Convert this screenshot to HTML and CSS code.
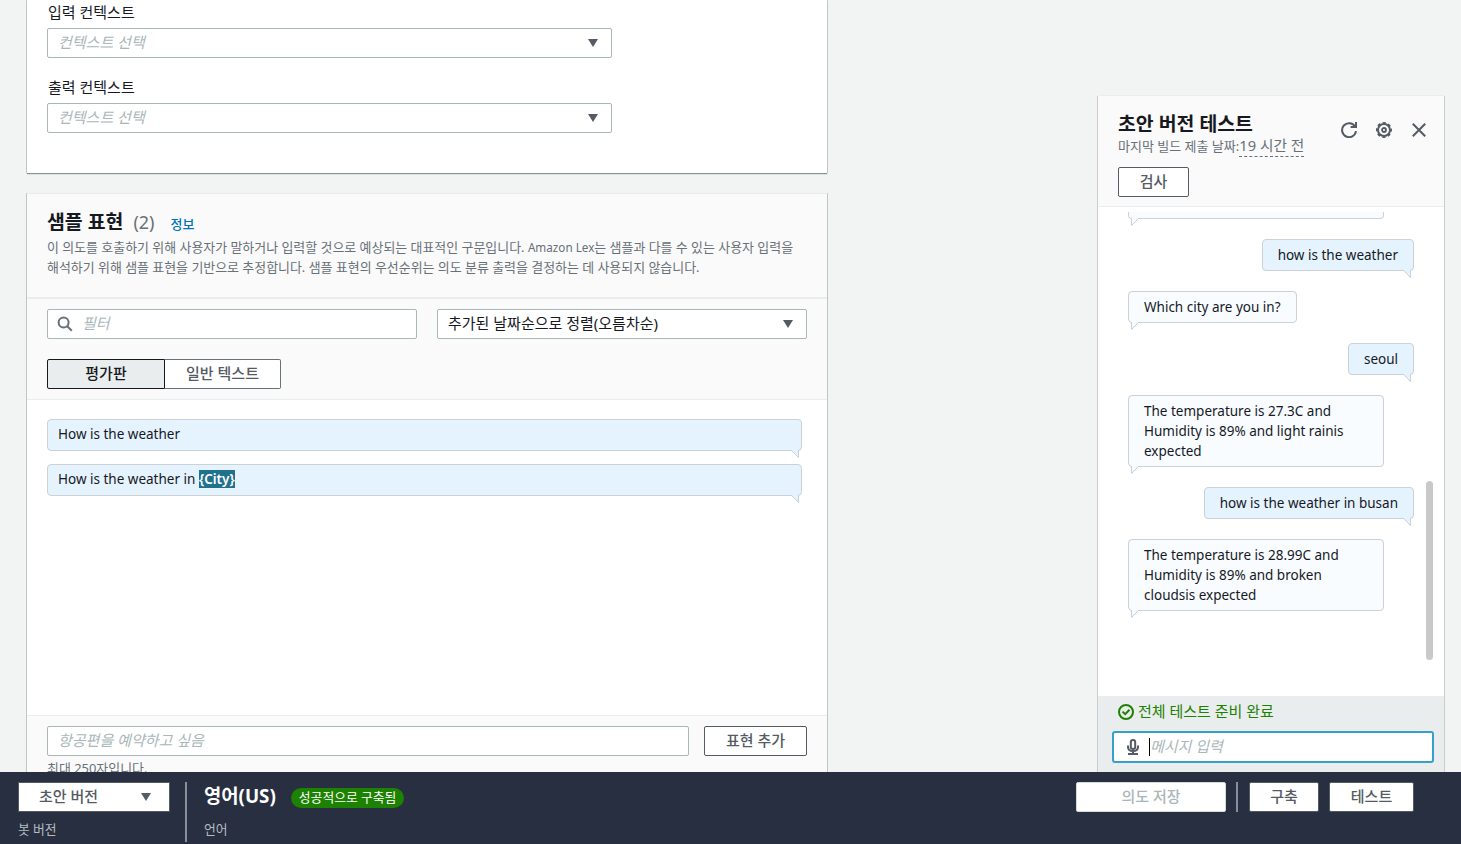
FILE: index.html
```html
<!DOCTYPE html>
<html lang="ko">

<head>
    <meta charset="UTF-8">
    <meta name="viewport" content="width=device-width, initial-scale=1.0">
    <title>Amazon Lex</title>
    <link rel="stylesheet" href="styles.css">
</head>

<body>
    <main class="workspace">
        <div class="editor">
            <section class="card contexts">
                <div class="field">
                    <label class="field-label">입력 컨텍스트</label>
                    <div class="select">
                        <span class="placeholder">컨텍스트 선택</span>
                        <span class="caret"></span>
                    </div>
                </div>
                <div class="field">
                    <label class="field-label">출력 컨텍스트</label>
                    <div class="select">
                        <span class="placeholder">컨텍스트 선택</span>
                        <span class="caret"></span>
                    </div>
                </div>
            </section>

            <section class="card utterances">
                <header class="card-header">
                    <div class="card-heading">
                        <h2 class="title">샘플 표현</h2>
                        <span class="count">(2)</span>
                        <a class="info-link">정보</a>
                    </div>
                    <p class="description">이 의도를 호출하기 위해 사용자가 말하거나 입력할 것으로 예상되는 대표적인 구문입니다. <span class="product">Amazon Lex</span>는 샘플과 다를 수 있는 사용자 입력을<br>해석하기 위해 샘플 표현을 기반으로 추정합니다. 샘플 표현의 우선순위는 의도 분류 출력을 결정하는 데 사용되지 않습니다.</p>
                </header>

                <div class="filters">
                    <div class="filter-row">
                        <div class="select search">
                            <svg class="search-icon" width="16" height="16" viewBox="0 0 16 16" fill="none" stroke="#687078" stroke-width="2">
                                <circle cx="6.6" cy="6.6" r="5" />
                                <path d="M10.2 10.2l4.6 4.6" />
                            </svg>
                            <span class="placeholder">필터</span>
                        </div>
                        <div class="select sort">
                            <span>추가된 날짜순으로 정렬(오름차순)</span>
                            <span class="caret"></span>
                        </div>
                    </div>
                    <div class="segments">
                        <button class="segment active">평가판</button>
                        <button class="segment">일반 텍스트</button>
                    </div>
                </div>

                <div class="utterance-list">
                    <div class="bubble user">How is the weather<svg class="tail" width="9" height="9" viewBox="0 0 9 9"><path d="M0 0L7.5 7.5V0" /></svg></div>
                    <div class="bubble user">How is the weather in <span class="slot">{City}</span><svg class="tail" width="9" height="9" viewBox="0 0 9 9"><path d="M0 0L7.5 7.5V0" /></svg></div>
                </div>

                <footer class="add-utterance">
                    <div class="add-row">
                        <div class="select"><span class="placeholder">항공편을 예약하고 싶음</span></div>
                        <button class="button">표현 추가</button>
                    </div>
                    <p class="hint">최대 250자입니다.</p>
                </footer>
            </section>
        </div>

        <aside class="test-panel">
            <header class="test-header">
                <div class="test-heading">
                    <h2 class="title">초안 버전 테스트</h2>
                    <div class="build-date">마지막 빌드 제출 날짜:<span class="ago">19 시간 전</span></div>
                    <button class="button inspect">검사</button>
                </div>
                <div class="test-icons">
                    <svg width="16" height="16" viewBox="0 0 16 16" fill="none" stroke="#545b64" stroke-width="2">
                        <path d="M15 9.2A7 7 0 1 1 14 4.4" />
                        <path d="M15 0v5H9.6" />
                    </svg>
                    <svg width="16" height="16" viewBox="0 0 16 16" fill="none" stroke="#545b64" stroke-width="2">
                        <circle cx="8" cy="8" r="6" />
                        <circle cx="8" cy="8" r="7.2" stroke-width="1.6" stroke-dasharray="3.2 2.455" stroke-dashoffset="1.6" />
                        <circle cx="8" cy="8" r="2" stroke-width="1.8" />
                    </svg>
                    <svg width="16" height="16" viewBox="0 0 16 16" fill="none" stroke="#545b64" stroke-width="2">
                        <path d="M1.8 1.8l12.4 12.4M14.2 1.8L1.8 14.2" />
                    </svg>
                </div>
            </header>

            <div class="chat">
                <div class="messages">
                    <div class="bubble bot cut"><svg class="tail" width="9" height="9" viewBox="0 0 9 9"><path d="M9 0L1.5 7.5V0" /></svg></div>
                    <div class="bubble user">how is the weather<svg class="tail" width="9" height="9" viewBox="0 0 9 9"><path d="M0 0L7.5 7.5V0" /></svg></div>
                    <div class="bubble bot">Which city are you in?<svg class="tail" width="9" height="9" viewBox="0 0 9 9"><path d="M9 0L1.5 7.5V0" /></svg></div>
                    <div class="bubble user">seoul<svg class="tail" width="9" height="9" viewBox="0 0 9 9"><path d="M0 0L7.5 7.5V0" /></svg></div>
                    <div class="bubble bot wide">The temperature is 27.3C and<br>Humidity is 89% and light rainis<br>expected<svg class="tail" width="9" height="9" viewBox="0 0 9 9"><path d="M9 0L1.5 7.5V0" /></svg></div>
                    <div class="bubble user">how is the weather in busan<svg class="tail" width="9" height="9" viewBox="0 0 9 9"><path d="M0 0L7.5 7.5V0" /></svg></div>
                    <div class="bubble bot wide">The temperature is 28.99C and<br>Humidity is 89% and broken<br>cloudsis expected<svg class="tail" width="9" height="9" viewBox="0 0 9 9"><path d="M9 0L1.5 7.5V0" /></svg></div>
                </div>
                <div class="scroll-thumb"></div>
            </div>

            <footer class="composer">
                <div class="status">
                    <svg width="16" height="16" viewBox="0 0 16 16" fill="none" stroke="#1d8102" stroke-width="2">
                        <circle cx="8" cy="8" r="7" />
                        <path d="M4.5 7.6l2.7 2.6 4.3-4.4" />
                    </svg>
                    <span>전체 테스트 준비 완료</span>
                </div>
                <div class="message-input">
                    <svg width="12" height="16" viewBox="0 0 12 16" fill="none" stroke="#545b64" stroke-width="2">
                        <rect x="3.8" y="1" width="4.4" height="9" rx="2.2" />
                        <path d="M1 6.5v1.4c0 2.6 2 4.1 5 4.1s5-1.5 5-4.1V6.5M6 12v3M1 15h10" />
                    </svg>
                    <span class="cursor"></span>
                    <span class="placeholder">메시지 입력</span>
                </div>
            </footer>
        </aside>
    </main>

    <footer class="toolbar">
        <div class="version">
            <div class="version-select"><span>초안 버전</span><span class="caret"></span></div>
            <span class="caption">봇 버전</span>
        </div>
        <div class="divider"></div>
        <div class="language">
            <div class="language-row">
                <strong>영어(US)</strong>
                <span class="badge">성공적으로 구축됨</span>
            </div>
            <span class="caption">언어</span>
        </div>
        <div class="actions">
            <button class="button save" disabled>의도 저장</button>
            <div class="divider"></div>
            <button class="button build">구축</button>
            <button class="button test">테스트</button>
        </div>
    </footer>
</body>

</html>
```

FILE: styles.css
```css
:root {
    --page: #f2f3f3;
    --panel: #fafafa;
    --text: #16191f;
    --muted: #687078;
    --dark: #545b64;
    --input-border: #aab7b8;
    --line: #eaeded;
    --bubble-border: #ccd1d5;
}

* {
    margin: 0;
    padding: 0;
    box-sizing: border-box;
}

body {
    height: 844px;
    overflow: hidden;
    display: flex;
    flex-direction: column;
    background: var(--page);
    color: var(--text);
    font-family: "Noto Sans", "Noto Sans CJK KR", sans-serif;
    font-size: 15px;
    line-height: 20px;
}

button {
    font: inherit;
}

.workspace {
    height: 772px;
    display: flex;
    justify-content: space-between;
    padding: 0 17px 0 27px;
    overflow: hidden;
}

.editor {
    width: 800px;
    display: flex;
    flex-direction: column;
    gap: 21px;
}

.card {
    flex: none;
    background: #fff;
    box-shadow: 0 1px 1px rgba(0, 28, 36, 0.45), 1px 0 0 #d0d4d5, -1px 0 0 #d0d4d5;
}

.contexts {
    display: flex;
    flex-direction: column;
    gap: 19px;
    height: 173px;
    padding: 2px 20px 0;
}

.field {
    width: 565px;
}

.field-label {
    display: block;
    margin-bottom: 6px;
    padding-left: 1px;
}

.select {
    display: flex;
    align-items: center;
    height: 30px;
    padding: 0 13px 0 10px;
    background: #fff;
    border: 1px solid var(--input-border);
    border-radius: 2px;
}

.select span:first-of-type:not(.caret) {
    padding-bottom: 2px;
}

.placeholder {
    color: var(--input-border);
    font-style: italic;
}

.caret {
    margin-left: auto;
    border: 5px solid transparent;
    border-top: 8px solid var(--dark);
    border-bottom: 0;
}

.utterances {
    border-top: 1px solid var(--line);
    margin-top: -1px;
}

.card-header {
    height: 103px;
    padding: 16px 20px 0;
    background: var(--panel);
}

.card-heading {
    display: flex;
    align-items: baseline;
    height: 27px;
}

.title {
    font-size: 19.4px;
    font-weight: 700;
    line-height: 24px;
}

.count {
    margin-left: 10px;
    font-size: 18px;
    color: var(--muted);
}

.info-link {
    margin-left: 16px;
    font-size: 13px;
    font-weight: 500;
    color: #0073bb;
}

.description,
.hint {
    font-size: 12.95px;
    color: var(--muted);
    white-space: nowrap;
}

.product {
    font-size: 11.7px;
}

.filters {
    height: 103px;
    padding: 10px 20px 0;
    background: var(--panel);
    border-top: 2px solid var(--line);
    border-bottom: 1px solid var(--line);
}

.filter-row {
    display: grid;
    grid-template-columns: 1fr 1fr;
    gap: 20px;
    margin-bottom: 20px;
}

.search {
    padding-left: 9px;
    gap: 9px;
}

.segments {
    display: flex;
}

.segment {
    width: 116px;
    height: 30px;
    padding-bottom: 2px;
    border: 1px solid var(--muted);
    border-left: 0;
    border-radius: 0 2px 2px 0;
    background: #fff;
    color: var(--dark);
    font-weight: 500;
}

.segment.active {
    width: 118px;
    border: 1px solid var(--text);
    border-radius: 2px 0 0 2px;
    background: var(--line);
    color: var(--text);
}

.utterance-list {
    display: flex;
    flex-direction: column;
    gap: 13px;
    height: 315px;
    padding: 19px 25px 0 20px;
}

.bubble {
    position: relative;
    padding: 5px 15px;
    border: 1px solid var(--bubble-border);
    border-radius: 4px;
    font-size: 13.5px;
}

.bubble.user {
    background: #e5f3ff;
}

.bubble.bot {
    background: #f8fcff;
}

.tail {
    position: absolute;
    bottom: -9px;
    stroke: var(--bubble-border);
}

.user .tail {
    right: 1px;
    fill: #e5f3ff;
}

.bot .tail {
    left: 1px;
    fill: #f8fcff;
}

.utterance-list .bubble {
    padding: 4px 10px 6px;
}

.slot {
    display: inline-block;
    height: 18px;
    line-height: 18px;
    background: #21718d;
    color: #fff;
    font-weight: 600;
}

.add-utterance {
    padding: 10px 20px;
    background: var(--panel);
    border-top: 1px solid var(--line);
}

.add-row {
    display: flex;
    gap: 15px;
}

.add-row .select {
    flex: 1;
}

.button {
    height: 30px;
    padding-bottom: 2px;
    border: 1px solid var(--dark);
    border-radius: 2px;
    background: #fff;
    color: var(--dark);
    font-weight: 500;
}

.add-row .button {
    width: 103px;
}

.hint {
    margin-top: 2px;
}

.test-panel {
    width: 346px;
    margin-top: 96px;
    display: flex;
    flex-direction: column;
    background: #fff;
    box-shadow: 0 -1px 0 var(--line), 1px 0 0 #c8cdce, -1px 0 0 #c8cdce;
}

.test-header {
    display: flex;
    justify-content: space-between;
    height: 111px;
    padding: 15px 17px 0 20px;
    background: var(--panel);
    border-bottom: 1px solid var(--line);
}

.test-heading .title {
    padding-top: 1px;
}

.build-date {
    display: flex;
    align-items: baseline;
    height: 32px;
    margin-top: -1px;
    font-size: 13px;
    line-height: 20px;
    color: var(--muted);
}

.ago {
    padding-bottom: 1px;
    font-size: 14.7px;
    border-bottom: 1px dashed var(--muted);
}

.inspect {
    width: 71px;
}

.test-icons {
    display: flex;
    gap: 19px;
    padding-top: 11px;
}

.chat {
    flex: 1;
    display: flex;
    justify-content: space-between;
    padding: 5px 11px 0 30px;
    overflow: hidden;
}

.messages {
    width: 286px;
    display: flex;
    flex-direction: column;
    align-items: flex-start;
    gap: 20px;
}

.messages .user {
    align-self: flex-end;
}

.wide,
.cut {
    width: 256px;
}

.cut {
    height: 7px;
    padding: 0;
    border-top: 0;
    border-radius: 0 0 4px 4px;
}

.scroll-thumb {
    width: 7px;
    height: 179px;
    margin-top: 269px;
    border-radius: 4px;
    background: #c9c9c9;
}

.composer {
    height: 76px;
    padding: 6px 10px 0 14px;
    background: var(--line);
}

.status {
    display: flex;
    align-items: center;
    gap: 4px;
    height: 20px;
    margin: 0 0 9px 6px;
    color: #1d8102;
}

.status span,
.message-input .placeholder {
    padding-bottom: 2px;
}

.message-input {
    display: flex;
    align-items: center;
    height: 32px;
    padding-left: 13px;
    border: 2px solid #37a0c8;
    border-radius: 3px;
    background: #fff;
}

.cursor {
    width: 1px;
    height: 18px;
    margin-left: 10px;
    background: #000;
}

.toolbar {
    height: 72px;
    display: flex;
    padding: 10px 47px 0 18px;
    background: #272f40;
    color: #fff;
}

.version {
    width: 167px;
}

.version-select {
    display: flex;
    align-items: center;
    width: 152px;
    height: 30px;
    padding: 0 18px 0 20px;
    margin-bottom: 6px;
    border: 1px solid var(--dark);
    background: #fff;
    color: var(--dark);
    font-weight: 500;
}

.version-select span:first-child {
    padding-bottom: 2px;
}

.caption {
    font-size: 12.8px;
    color: #b5bbc2;
}

.divider {
    width: 2px;
    height: 60px;
    background: #879096;
}

.language {
    margin-left: 17px;
}

.language-row {
    display: flex;
    align-items: center;
    height: 30px;
    margin-bottom: 6px;
}

.language-row strong {
    padding-bottom: 2px;
    font-size: 18.8px;
}

.badge {
    height: 20px;
    margin: 1px 0 0 15px;
    padding: 0 8px;
    border-radius: 10px;
    background: #1d8102;
    font-size: 12.8px;
    line-height: 19px;
}

.actions {
    display: flex;
    margin-left: auto;
}

.actions .divider {
    height: 30px;
    margin: 0 11px 0 10px;
}

.save {
    width: 150px;
    border-color: #d5dbdb;
    color: #aab7b8;
}

.build {
    width: 70px;
    margin-right: 10px;
}

.test {
    width: 85px;
}
```
